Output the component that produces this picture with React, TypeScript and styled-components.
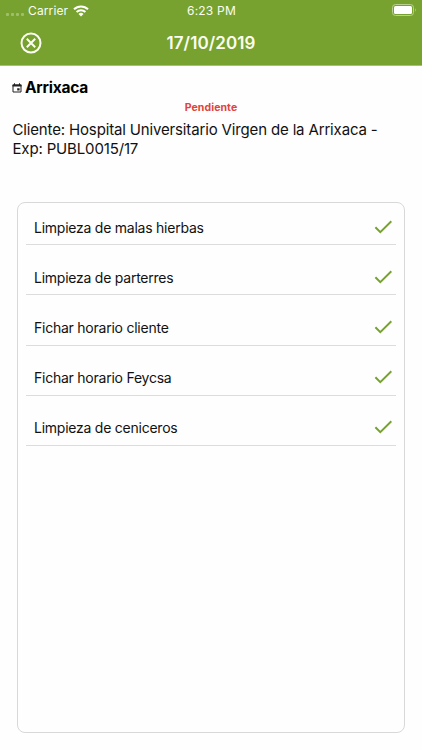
import React from "react";
import styled, { createGlobalStyle } from "styled-components";

const GlobalStyle = createGlobalStyle`
  * { box-sizing: border-box; }
  body {
    margin: 0;
    background: #fefefe;
    color: #111;
    font-family: Inter, "Liberation Sans", sans-serif;
  }
`;

const Screen = styled.div`
  width: 422px;
  height: 750px;
  display: flex;
  flex-direction: column;
  overflow: hidden;
`;

const Header = styled.header`
  height: 66px;
  flex: none;
  background: #77a22f;
  border-bottom: 1px solid #a5c077;
  color: #fbfdf2;
`;

const StatusBar = styled.div`
  height: 21px;
  display: grid;
  grid-template-columns: 1fr auto 1fr;
  align-items: center;
  padding: 0 5px 0 6px;
  font-size: 12px;
  line-height: 21px;
`;

const Signal = styled.div`
  display: flex;
  align-items: center;
`;

const Dots = styled.div`
  display: flex;
  gap: 1.5px;
  margin: 7px 4px 0 0;
`;

const Dot = styled.i`
  width: 3.4px;
  height: 3px;
  border-radius: 1px;
  background: #a0bf6b;
`;

const Carrier = styled.span`
  letter-spacing: 0.1px;
  margin-right: 5px;
`;

const Clock = styled.span`
  letter-spacing: 0.2px;
`;

const BatteryIcon = styled.svg`
  justify-self: end;
  margin-bottom: 1px;
`;

const NavBar = styled.div`
  height: 44px;
  display: grid;
  grid-template-columns: 42px 1fr 42px;
  align-items: center;
  padding: 0 10px;
`;

const CloseButton = styled.button`
  display: flex;
  justify-content: center;
  padding: 0;
  border: 0;
  background: none;
  color: inherit;
`;

const Title = styled.h1`
  margin: 0;
  text-align: center;
  font-size: 17px;
  font-weight: 600;
  line-height: 24px;
  letter-spacing: 0.1px;
`;

const Details = styled.section`
  height: 136px;
  flex: none;
  padding: 12px 12.5px 0;
`;

const Place = styled.h2`
  display: flex;
  align-items: center;
  gap: 3px;
  margin: 0 0 0 -0.5px;
  font-size: 15.5px;
  font-weight: 700;
  line-height: 20px;
  letter-spacing: -0.22px;
  color: #000;
`;

const Status = styled.div`
  margin-top: 3px;
  text-align: center;
  font-size: 10.5px;
  font-weight: 700;
  line-height: 14px;
  letter-spacing: 0.1px;
  color: #e0443c;
`;

const Client = styled.p`
  margin: 6px 0 0;
  font-size: 15px;
  line-height: 18.5px;
  letter-spacing: -0.15px;
`;

const Card = styled.ul`
  height: 531px;
  flex: none;
  margin: 0 17px;
  padding: 0 8px;
  list-style: none;
  border: 1px solid #d8d8d8;
  border-radius: 8px;
`;

const Task = styled.li`
  height: 50.25px;
  display: flex;
  align-items: center;
  justify-content: space-between;
  padding: 16px 3px 0 8px;
  border-bottom: 1px solid #dcdcdc;
  font-size: 14px;
  line-height: 20px;
  letter-spacing: -0.24px;

  &:first-child {
    height: 42px;
    padding-top: 8px;
  }
`;

const CheckIcon = styled.svg`
  margin-bottom: 2px;
`;

const tasks = [
  "Limpieza de malas hierbas",
  "Limpieza de parterres",
  "Fichar horario cliente",
  "Fichar horario Feycsa",
  "Limpieza de ceniceros",
];

const Wifi = () => (
  <svg width="16" height="12" viewBox="0 0 16 12" fill="none" stroke="#fff" strokeWidth="2">
    <path d="M1 4.3a10 10 0 0 1 14 0" />
    <path d="M3.6 7a6.3 6.3 0 0 1 8.8 0" />
    <path d="M5.5 9a3.6 3.6 0 0 1 5 0L8 11.6z" fill="#fff" stroke="none" />
  </svg>
);

const Battery = () => (
  <BatteryIcon width="25" height="12" viewBox="0 0 25 12">
    <rect x="0.5" y="0.5" width="21" height="11" rx="3" fill="none" stroke="#b9d091" />
    <rect x="2" y="2" width="18" height="8" rx="1.5" fill="#fff" />
    <path d="M23 4q1.6 2 0 4z" fill="#b9d091" />
  </BatteryIcon>
);

const Close = () => (
  <svg width="22" height="22" viewBox="0 0 22 22" fill="none" stroke="currentColor" strokeWidth="2">
    <circle cx="11" cy="11" r="9.5" />
    <path d="M6.8 6.8l8.4 8.4M15.2 6.8l-8.4 8.4" />
  </svg>
);

const Calendar = () => (
  <svg width="10" height="10" viewBox="0 0 10 10">
    <path d="M1 2h8v7H1z" fill="none" stroke="#222" strokeWidth="1" />
    <path d="M0.5 1.5h9v2h-9zM2 0.3h1v2H2zM7 0.3h1v2H7zM5.2 5.2h2.4v2.4H5.2z" fill="#222" />
  </svg>
);

const Check = () => (
  <CheckIcon width="19" height="14" viewBox="0 0 19 14" fill="none" stroke="#77a22f" strokeWidth="2">
    <path d="M1.4 7.2l4.9 4.9L17.3 1.2" />
  </CheckIcon>
);

export default function App() {
  return (
    <Screen>
      <GlobalStyle />
      <Header>
        <StatusBar>
          <Signal>
            <Dots>
              <Dot />
              <Dot />
              <Dot />
              <Dot />
            </Dots>
            <Carrier>Carrier</Carrier>
            <Wifi />
          </Signal>
          <Clock>6:23 PM</Clock>
          <Battery />
        </StatusBar>
        <NavBar>
          <CloseButton aria-label="Cerrar">
            <Close />
          </CloseButton>
          <Title>17/10/2019</Title>
        </NavBar>
      </Header>
      <Details>
        <Place>
          <Calendar />
          Arrixaca
        </Place>
        <Status>Pendiente</Status>
        <Client>
          Cliente: Hospital Universitario Virgen de la Arrixaca -<br />
          Exp: PUBL0015/17
        </Client>
      </Details>
      <Card>
        {tasks.map((task) => (
          <Task key={task}>
            {task}
            <Check />
          </Task>
        ))}
      </Card>
    </Screen>
  );
}
